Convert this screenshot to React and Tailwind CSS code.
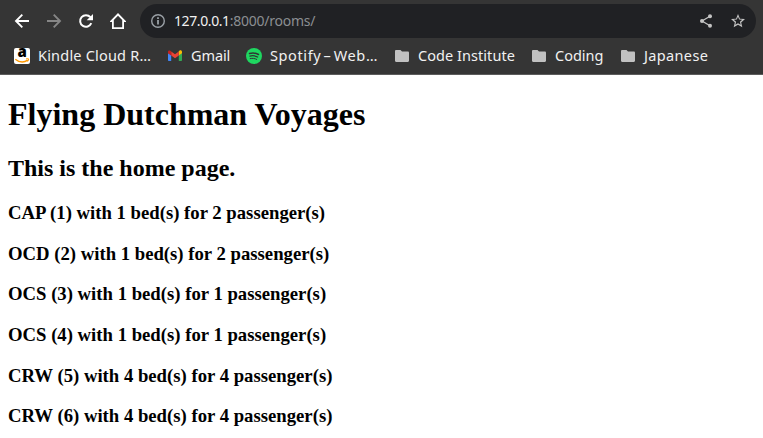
const rooms = [
  "CAP (1) with 1 bed(s) for 2 passenger(s)",
  "OCD (2) with 1 bed(s) for 2 passenger(s)",
  "OCS (3) with 1 bed(s) for 1 passenger(s)",
  "OCS (4) with 1 bed(s) for 1 passenger(s)",
  "CRW (5) with 4 bed(s) for 4 passenger(s)",
  "CRW (6) with 4 bed(s) for 4 passenger(s)",
];

function BackIcon() {
  return (
    <svg className="size-4 text-white" viewBox="0 0 16 16" fill="none" stroke="currentColor" strokeWidth="1.900">
      <path d="M15 8H2.5M8.3 1.7L2 8l6.3 6.3" />
    </svg>
  );
}

function ForwardIcon() {
  return (
    <svg className="size-4 text-[#868686]" viewBox="0 0 16 16" fill="none" stroke="currentColor" strokeWidth="1.900">
      <path d="M1 8h12.500M7.700 1.700L14 8l-6.300 6.300" />
    </svg>
  );
}

function ReloadIcon() {
  return (
    <svg className="size-4 text-white" viewBox="0 0 16 16">
      <path d="M13.300 10.200A5.800 5.800 0 1 1 12.400 4.200" fill="none" stroke="currentColor" strokeWidth="2" />
      <path d="M15 1v6.300H8.700z" fill="currentColor" />
    </svg>
  );
}

function HomeIcon() {
  return (
    <svg className="size-4 text-white" viewBox="0 0 16 16" fill="currentColor" fillRule="evenodd">
      <path d="M8 0L0 8.300V9h2v7h12V9h2v-.7zM8 2.700L12.200 7v7.200H3.800V7z" />
    </svg>
  );
}

function InfoIcon() {
  return (
    <svg className="size-4 text-[#9aa0a6]" viewBox="0 0 16 16">
      <circle cx="8" cy="8" r="6.300" fill="none" stroke="currentColor" strokeWidth="1.400" />
      <path d="M7.100 7h1.800v4.500H7.100zM7.100 4.300h1.800v1.700H7.100z" fill="currentColor" />
    </svg>
  );
}

function ShareIcon() {
  return (
    <svg className="size-4 text-[#c4c4c4]" viewBox="0 0 16 16" fill="currentColor">
      <path d="M12 3.200L4 8l8 4.800" fill="none" stroke="currentColor" strokeWidth="1.300" />
      <circle cx="12" cy="3.300" r="2" />
      <circle cx="4" cy="8" r="2" />
      <circle cx="12" cy="12.700" r="2" />
    </svg>
  );
}

function StarIcon() {
  return (
    <svg className="size-4 text-[#c4c4c4]" viewBox="0 0 24 24" fill="currentColor">
      <path d="M22.500 9.100l-7.600-.65L12 1.500 9.100 8.460l-7.600.64 5.750 4.990L5.530 21.500 12 17.570l6.480 3.930-1.720-7.410zM12 15.300l-3.950 2.390 1.050-4.500-3.490-3.030 4.600-.4L12 5.520l1.800 4.250 4.600.4-3.490 3.030 1.050 4.500z" />
    </svg>
  );
}

function AmazonIcon() {
  return (
    <span className="relative block size-4 shrink-0 rounded-[2px] bg-white">
      <span className="absolute left-[3.500px] top-[-1px] h-[8px] font-['Open_Sans',sans-serif] text-[15px] font-extrabold leading-[8px] text-black">a</span>
      <svg className="absolute inset-0 size-4" viewBox="0 0 16 16" fill="none" stroke="#ff9900">
        <path d="M1.300 11.200c4 3.300 8.800 3.400 12.500 1" strokeWidth="1.400" />
        <path d="M12 11c1.500-.5 2.700-.4 2.700 0s-.3 1.700-1.100 2.600" strokeWidth="1" />
      </svg>
    </span>
  );
}

function GmailIcon() {
  return (
    <svg className="size-4 shrink-0" viewBox="0 0 16 16">
      <path d="M1 5v7c0 .6.400 1 1 1h2.200V7.300z" fill="#4285f4" />
      <path d="M15 5v7c0 .6-.4 1-1 1h-2.200V7.300z" fill="#34a853" />
      <path d="M11.800 3.500v4L15 5.200V4c0-1.600-1.700-2.100-2.600-1.200z" fill="#fbbc04" />
      <path d="M4.200 7.500v-4L8 6.300l3.800-2.800v4L8 10.300z" fill="#ea4335" />
      <path d="M1 4v1.200l3.200 2.300v-4l-.8-.7C2.500 2.200 1 2.600 1 4z" fill="#c5221f" />
    </svg>
  );
}

function SpotifyIcon() {
  return (
    <svg className="size-4 shrink-0" viewBox="0 0 16 16">
      <circle cx="8" cy="8" r="8" fill="#1ed760" />
      <g fill="none" stroke="#303633" strokeLinecap="round">
        <path d="M3.500 5.500c3-.8 6.400-.5 9 1" strokeWidth="1.500" />
        <path d="M3.900 8.100c2.600-.7 5.400-.4 7.700.9" strokeWidth="1.250" />
        <path d="M4.200 10.600c2.300-.5 4.600-.3 6.500.8" strokeWidth="1" />
      </g>
    </svg>
  );
}

function FolderIcon() {
  return (
    <svg className="size-4 shrink-0" viewBox="0 0 16 16" fill="#c1c1c1">
      <path d="M2.200 2h4.300L8 3.500h5.800c.7 0 1.200.5 1.200 1.200v8.100c0 .7-.5 1.200-1.200 1.200H2.200C1.500 14 1 13.500 1 12.800V3.200C1 2.500 1.500 2 2.200 2z" />
    </svg>
  );
}

const bookmarks = [
  { Icon: AmazonIcon, label: "Kindle Cloud R…", box: "w-[153px]", text: "tracking-[0.2px]" },
  { Icon: GmailIcon, label: "Gmail", box: "w-[79px]", text: "tracking-[-0.1px]" },
  { Icon: SpotifyIcon, label: "Spotify – Web…", box: "w-[148px]", text: "tracking-[0.600px] [word-spacing:-2px]" },
  { Icon: FolderIcon, label: "Code Institute", box: "w-[137px]", text: "tracking-[0.05px]" },
  { Icon: FolderIcon, label: "Coding", box: "w-[89px]", text: "tracking-[0px]" },
  { Icon: FolderIcon, label: "Japanese", box: "w-[100px]", text: "tracking-[0.35px]" },
];

export default function App() {
  return (
    <div className="h-[438px] w-[763px] overflow-hidden bg-white">
      <header className="h-[75px] border-b border-[#5c5c5c] bg-[#353535] font-['Noto_Sans',sans-serif]">
        <div className="flex h-[38px] items-end pr-[7px]">
          <nav className="flex h-[34px] w-[140px] shrink-0 items-center gap-4 pl-[14px]">
            <BackIcon />
            <ForwardIcon />
            <ReloadIcon />
            <HomeIcon />
          </nav>
          <div className="flex h-[34px] flex-1 items-center rounded-full bg-[#202124] pl-[10px] pr-[10px]">
            <InfoIcon />
            <span className="ml-2 flex-1 whitespace-nowrap text-[14px] leading-5 text-[#8b8e92]">
              <span className="tracking-[-0.4px] text-[#f1f1f1]">127.0.0.1</span>
              <span className="tracking-[-0.25px]">:8000/rooms/</span>
            </span>
            <ShareIcon />
            <span className="ml-4"><StarIcon /></span>
          </div>
        </div>
        <div className="flex h-9 items-center pl-[14px]">
          {bookmarks.map(({ Icon, label, box, text }) => (
            <div key={label} className={`flex shrink-0 items-center gap-2 ${box}`}>
              <Icon />
              <span className={`whitespace-nowrap pb-px text-[14.500px] leading-[19px] text-[#f1f1f1] ${text}`}>{label}</span>
            </div>
          ))}
        </div>
      </header>
      <main className="px-2 pt-[21.440px] font-['Liberation_Serif',serif] font-bold leading-[normal] text-black">
        <h1 className="mb-[21.440px] text-[32px] font-bold leading-[normal]">Flying Dutchman Voyages</h1>
        <h2 className="mb-[19.920px] text-[24px] font-bold leading-[normal]">This is the home page.</h2>
        {rooms.map((room) => (
          <h3 key={room} className="mb-[18.720px] text-[18.720px] font-bold leading-[normal]">{room}</h3>
        ))}
      </main>
    </div>
  );
}
